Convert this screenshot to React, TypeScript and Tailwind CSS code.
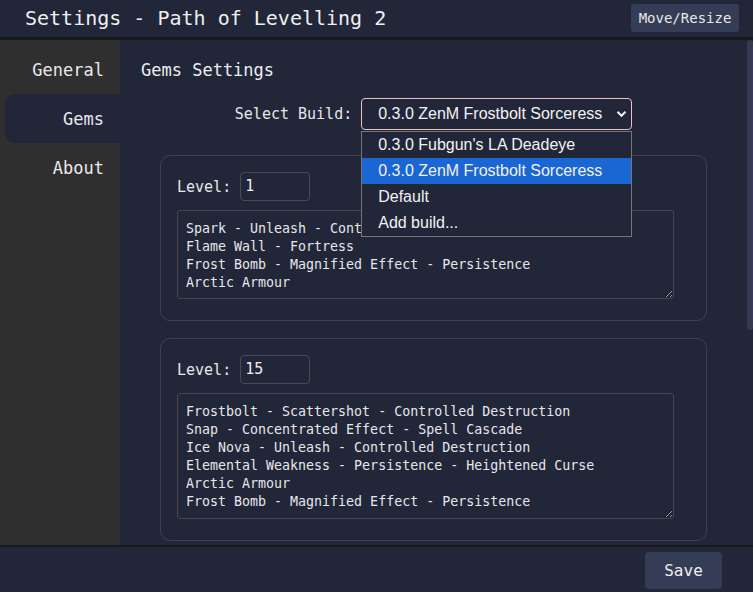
import React from "react";

const mono = { fontFamily: '"DejaVu Sans Mono", monospace' };

function Card({ level, text, h }: { level: string; text: string; h: string }) {
  return (
    <div className="border border-[#3f414c] rounded-[10px] pt-[16px] pl-[16px] pr-[32px] pb-[21px]">
      <div className="flex items-center gap-[9px]">
        <span className="text-[15px] leading-[20px] text-[#e6e7ea]">Level:</span>
        <div className="w-[70px] h-[29px] border border-[#4a4b52] rounded-[4px] pl-[4px] flex items-center text-[15px] text-[#eeeef0]">
          {level}
        </div>
      </div>
      <textarea
        readOnly
        defaultValue={text}
        className={`mt-[9px] block w-full ${h} bg-[#222639] border border-[#44464f] rounded-[3px] pt-[9px] px-[8px] text-[13.3px] leading-[18px] text-[#e6e7ea] outline-none [color-scheme:dark]`}
        style={mono}
      />
    </div>
  );
}

export default function App() {
  return (
    <div
      className="w-[753px] h-[592px] flex flex-col bg-[#222639] text-[#e8e9ec] overflow-hidden"
      style={mono}
    >
      {/* Header */}
      <div className="h-[40px] shrink-0 flex items-center justify-between pl-[25px] pr-[14px] border-b-[3px] border-[#18191f] pb-[1px]">
        <span className="text-[20px] leading-[24px] text-[#eeeef0]">Settings - Path of Levelling 2</span>
        <div className="w-[108px] h-[28px] flex items-center justify-center whitespace-nowrap rounded-[3px] bg-[#353c56] text-[14px] text-[#e8e9ec]">
          Move/Resize
        </div>
      </div>

      {/* Body */}
      <div className="flex-1 flex min-h-0">
        {/* Sidebar */}
        <div className="w-[120px] shrink-0 bg-[#2f2f2f] pt-[5px] flex flex-col">
          {["General", "Gems", "About"].map((t) => (
            <div
              key={t}
              className={`ml-[5px] w-[115px] h-[49px] flex items-center justify-end pr-[16px] pt-[3px] text-[17px] ${
                t === "Gems" ? "bg-[#232639] rounded-l-[9px]" : ""
              }`}
            >
              {t}
            </div>
          ))}
        </div>

        {/* Main */}
        <div className="flex-1 flex min-w-0">
          <div className="flex-1 min-w-0 overflow-hidden">
            <div className="pl-[21px] pt-[18px] text-[17px] leading-[24px] text-[#eeeef0]">Gems Settings</div>
            <div className="mt-[16px] flex justify-center items-center gap-[9px]">
              <span className="text-[15px] text-[#e6e7ea]">Select Build:</span>
              <div className="relative w-[271px] h-[32px]">
                <div
                  className="w-full h-full border border-[#e9c2c2] rounded-[4px] flex items-center justify-between pl-[16px] pr-[4px] text-[16px] text-[#f2f2f4]"
                  style={{ fontFamily: '"Liberation Sans", Arial, sans-serif' }}
                >
                  <span>0.3.0 ZenM Frostbolt Sorceress</span>
                  <svg width="11" height="8" viewBox="0 0 11 8">
                    <path d="M1.5 1.8 L5.5 5.8 L9.5 1.8" fill="none" stroke="#f2f2f4" strokeWidth="2" />
                  </svg>
                </div>
                <div
                  className="absolute left-0 top-[33px] w-full z-10 bg-[#222639] border border-[#767676] text-[16px] text-[#f2f2f4]"
                  style={{ fontFamily: '"Liberation Sans", Arial, sans-serif' }}
                >
                  <div className="h-[26px] flex items-center pl-[16px]">0.3.0 Fubgun's LA Deadeye</div>
                  <div className="h-[26px] flex items-center pl-[16px] bg-[#1a66d2]">0.3.0 ZenM Frostbolt Sorceress</div>
                  <div className="h-[26px] flex items-center pl-[16px]">Default</div>
                  <div className="h-[26px] flex items-center pl-[16px]">Add build...</div>
                </div>
              </div>
            </div>

            <div className="mx-[40px] mt-[25px] flex flex-col gap-[17px]">
              <Card
                level="1"
                h="h-[89px]"
                text={"Spark - Unleash - Controlled Destruction\nFlame Wall - Fortress\nFrost Bomb - Magnified Effect - Persistence\nArctic Armour"}
              />
              <Card
                level="15"
                h="h-[126px]"
                text={"Frostbolt - Scattershot - Controlled Destruction\nSnap - Concentrated Effect - Spell Cascade\nIce Nova - Unleash - Controlled Destruction\nElemental Weakness - Persistence - Heightened Curse\nArctic Armour\nFrost Bomb - Magnified Effect - Persistence"}
              />
            </div>
          </div>
          {/* Scrollbar */}
          <div className="w-[6px] shrink-0">
            <div className="h-[290px] bg-[#343a53] rounded-[3px]" />
          </div>
        </div>
      </div>

      {/* Footer */}
      <div className="h-[47px] shrink-0 border-t-[2px] border-[#18191f] flex justify-end items-start pt-[5px] pr-[31px]">
        <div className="w-[77px] h-[37px] rounded-[4px] bg-[#353c56] flex items-center justify-center text-[16px] text-[#eeeef0]">
          Save
        </div>
      </div>
    </div>
  );
}
